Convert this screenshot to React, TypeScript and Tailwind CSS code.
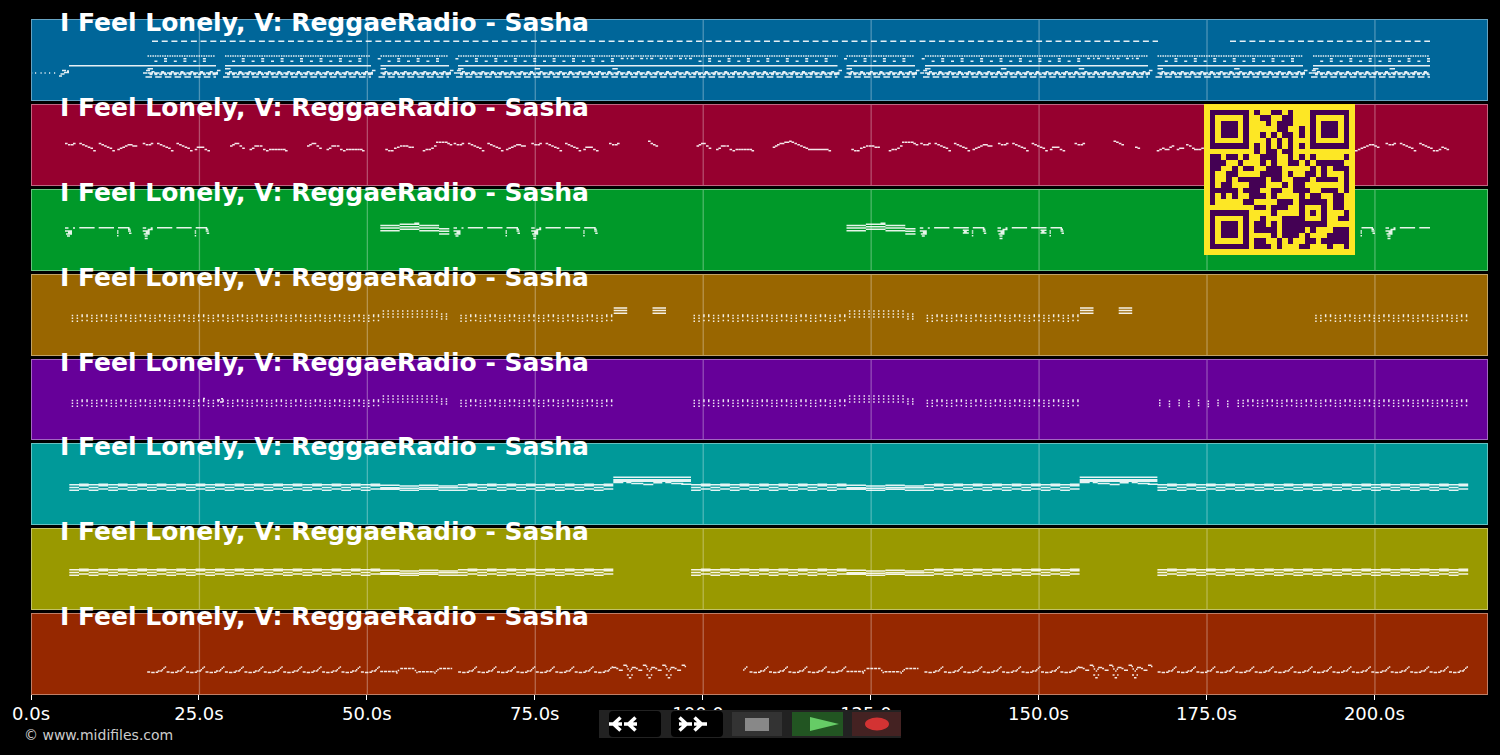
import { FC } from 'react';

interface Track {
  name: string;
  color: string;
  notes: string;
}

type Point = [number, number];

// The time axis: the roll starts at x = 31 and a bar of music is 19.43 wide
const ORIGIN = 31;
const WIDTH = 1457;
const BAR = 19.43;
const FIRST_BAR = 69.3;
const STEP = 167.93;

const at = (bar: number) => FIRST_BAR + bar * BAR;

const note = (x: number, y: number, length: number) =>
  `M${x.toFixed(1)} ${y.toFixed(1)}h${length.toFixed(1)}`;

// Repeats a note from one x to another
const repeat = (from: number, to: number, y: number, length: number, period: number) => {
  let d = '';
  for (let x = from; x < to - 0.5; x += period) d += note(x, y, Math.min(length, to - x));
  return d;
};

// A melodic line as short notes that step through the given points
const melody = (points: Point[], dx = 0) => {
  let d = '';
  for (let i = 0; i < points.length - 1; i++) {
    const [x1, y1] = points[i];
    const [x2, y2] = points[i + 1];
    const count = Math.max(1, Math.round((x2 - x1) / 2.6));
    for (let k = 0; k < count; k++) {
      const t = (k + 0.5) / count;
      const y = Math.round((y1 + (y2 - y1) * t) / 1.2) * 1.2;
      d += note(x1 + ((x2 - x1) * k) / count + dx, y, 2.6);
    }
  }
  return d;
};

const drums = () => {
  const sections: Point[] = [[147.5, 216], [225, 371], [380.5, 449], [458, 837.5], [846.5, 915], [925, 1148], [1157.5, 1303], [1313, 1430]];
  let d = repeat(152, 1158, 22.3, 6, BAR / 2) + repeat(1230, 1430, 22.3, 6, BAR / 2);
  d += note(69, 46.7, 79);
  d += [31, 35, 40.5, 44.5, 49, 54].map((x) => note(x, 54, 1.2)).join('');
  d += note(59, 57, 3) + note(60.5, 55, 4) + note(62, 51.5, 4) + note(64, 53.5, 5) + note(67, 52, 2);
  sections.forEach(([from, to]) => {
    d += repeat(from, to, 37, 1.5, BAR / 8);
    d += note(from, 46.7, to - from);
    d += note(from, 49.8, 5.5);
    d += repeat(from, to, 54, 5.5, BAR / 3);
    d += repeat(from + 2, to, 55.6, 3, BAR / 4);
    d += repeat(from + 4, to, 52.8, 3, BAR / 2);
    d += repeat(from - 2, to, 58, 6.5, BAR / 2);
    if (to < 1400) d += note(to - 1, 55, 3) + note(to + 1, 51.5, 3.5) + note(to, 53.5, 2);
  });
  for (let bar = 4; bar < 70; bar++) {
    const x = at(bar) + 7.4;
    const playing = sections.some(([from, to]) => x >= from - 2 && x + 10 < to + 3);
    if (!playing) continue;
    if ((bar >= 28 && bar < 32) || (bar >= 52 && bar < 56)) {
      d += note(x, 39.5, 3) + note(x + 6, 39.5, 1.5) + note(x + 10, 39.5, 3);
      continue;
    }
    d += note(x, 42.2, 3) + note(x + 9.6, 42.2, 3) + note(x + 9.6, 39.7, 3);
  }
  [16, 20, 40, 44].forEach((bar) => (d += note(at(bar) - 2.5, 39.7, 3)));
  [24, 28, 48, 52, 60, 68].forEach((bar) => (d += note(at(bar) - 1, 49.8, 5.5)));
  [4, 20, 44, 64].forEach((bar) => (d += note(at(bar) - 4, 54, 4) + note(at(bar) - 1, 51.5, 4)));
  return d;
};

const vocal = () => {
  const turn: Point[] = [[65, 39], [68, 41.3], [71, 41.3], [75, 39.5]];
  const fall: Point[] = [[79.3, 38.8], [96, 47]];
  const fall2: Point[] = [[98.7, 38.8], [115, 47]];
  const rise: Point[] = [[117.3, 46.5], [130, 40], [137, 43]];
  const close: Point[] = [[117, 47], [119, 44], [124, 42.5], [132.5, 48]];
  const arch: Point[] = [[230, 42], [236.7, 39], [245, 45]];
  const answer: Point[] = [[249.5, 46.8], [256.7, 41], [263, 43], [266, 47.5], [269, 45], [283, 45.5], [287, 48]];
  const low: Point[] = [[385.3, 45], [391, 47.2], [397, 44], [403, 42], [414, 43.4]];
  const climb: Point[] = [[422.7, 46.8], [434, 44.6], [436, 39], [445, 38], [452, 41]];
  let d = '';
  [0, 388.6, 855.2].forEach((dx) => {
    d += melody(turn, dx) + melody(fall, dx) + melody(fall2, dx) + melody(rise, dx);
    const next = dx + 77.7;
    d += melody(turn, next) + melody(fall, next) + melody(fall2, next) + melody(close, next);
  });
  [0, 77, 466.5].forEach((dx) => (d += melody(arch, dx) + melody(answer, dx)));
  [0, 466].forEach((dx) => (d += melody(low, dx) + melody(climb, dx)));
  d += melody(turn, 544) + melody(turn, 1009.5);
  d += melody([[648, 37], [658, 42.5]]) + melody([[1113.5, 37], [1124, 42]]) + melody([[1135, 43], [1140, 45]]);
  d += melody([[772.7, 44.5], [777, 40.5], [791.5, 37.5], [803, 42], [808, 45], [826, 45], [831, 48]]);
  d += melody([[1156.7, 46.8], [1162, 44.5], [1167, 46], [1174, 41.5]]);
  d += melody([[1176.7, 46], [1184, 43.5]]) + melody([[1186, 39.5], [1192, 43.5], [1196, 46], [1204, 44.5]]);
  d += melody([[1355, 47], [1371.7, 40.5], [1379.5, 43.5]]);
  d += melody(turn, 1320.5) + melody(fall, 1320.5) + melody(fall2, 1320.5);
  d += melody([[1436, 47], [1444, 43], [1449, 47]]);
  return d;
};

const horns = () => {
  const pickup = (x: number, deep: boolean) => {
    let d = note(x, 39, 3.5) + note(x + 8, 39, 2) + note(x, 42, 7) + note(x + 3, 43.6, 4);
    d += note(x + 1, 45, 6) + note(x + 2, 47, 3);
    return deep ? d + note(x + 2, 49.5, 3) + note(x + 5, 40.5, 5) : d;
  };
  const ending = (x: number) =>
    note(x + 53, 38.8, 11.5) + note(x + 52, 42, 1.5) + note(x + 52, 44, 1.5) + note(x + 52, 46.8, 1.5) +
    note(x + 63, 40.3, 2.5) + note(x + 63, 42, 3) + note(x + 64, 44.4, 2.5);
  let d = '';
  [65, 142.7, 453.5, 531.2, 919.8, 997.5].forEach((x, i) => {
    d += pickup(x, i % 2 === 1) + note(x + 14.3, 38.8, 15.3) + note(x + 33.7, 38.8, 15.3) + ending(x);
    if (i > 3) d += note(x + 43, 41.3, 6) + note(x + 43, 44, 6) + note(x + 44, 42.6, 3);
  });
  d += ending(1308.5) + pickup(1385.5, true) + note(1399.8, 38.8, 15.3) + note(1419.3, 38.8, 10.7);
  [380.3, 846.5].forEach((x) => {
    [36.5, 39, 41.8].forEach((y) => (d += note(x, y, 19.4) + note(x + 39, y, 19.8)));
    [35.2, 37.8, 40.4].forEach((y) => (d += note(x + 19.4, y, 19.6)));
    [39.8, 42.4, 45].forEach((y) => (d += note(x + 58.8, y, 10.2)));
    d += note(x + 34, 34.2, 5);
  });
  return d;
};

// Off-beat guitar chops: a column of dots on every quarter of a bar
const chops = (from: number, to: number, high = false) => {
  let d = '';
  for (let i = 0; i < Math.round((to - from) * 4); i++) {
    const x = at(from + i / 4) + 2.4;
    const rows = high ? [37, 40, 43] : i % 4 < 2 ? [41.6, 44.2, 47.2] : [41, 42.6, 46.6];
    rows.forEach((y) => (d += note(x, y, 1.5)));
  }
  return d;
};

const chopsPart = () => {
  let d = chops(0, 16) + chops(20, 28) + chops(32, 40) + chops(44, 52);
  [16, 40].forEach((bar) => {
    d += chops(bar, bar + 3, true);
    [0, 1].forEach((i) => [40, 42.5, 45].forEach((y) => (d += note(at(bar + 3 + i / 4) + 2.4, y, 1.5))));
  });
  return d;
};

const guitar = () => {
  let d = chopsPart() + chops(64, 72);
  [613.7, 652.5, 1080, 1118.7].forEach((x) => [34, 36.6, 39.2].forEach((y) => (d += note(x, y, 13.5))));
  return d;
};

const clavinet = () => {
  let d = chopsPart() + chops(60, 72);
  for (let i = 0; i < 8; i++) {
    [41.2, 44, 46.5].forEach((y) => (d += note(at(56 + i / 2) + 1.6, y + (i % 2), 1.5)));
  }
  return d + note(203, 39.5, 2) + note(217, 41, 3) + note(220, 43, 3) + note(221, 39.8, 2);
};

const pads = (from: number, to: number) => {
  let d = '';
  for (let i = 0; i < (to - from) * 2; i++) {
    const rows = i % 2 ? [41.2, 42.8, 46] : [41.8, 44.5, 47.4];
    rows.forEach((y) => (d += note(at(from + i / 2), y, BAR / 2)));
  }
  return d;
};

const padsPart = () => {
  let d = pads(0, 16) + pads(20, 28) + pads(32, 40) + pads(44, 52) + pads(56, 72);
  [16, 40].forEach((bar) => {
    [[42.2, 44.8, 46.4], [43, 45.2, 47.4], [42.2, 44.6, 46.4], [43, 44.8, 47.2]].forEach((rows, i) =>
      rows.forEach((y) => (d += note(at(bar + i), y, BAR)))
    );
  });
  return d;
};

const organ = () => {
  let d = padsPart();
  [28, 52].forEach((bar) => {
    [34.2, 36.8, 38.4].forEach((y) => (d += note(at(bar), y, BAR * 4)));
    d += note(at(bar), 39.5, 10) + note(at(bar) + 13, 39.5, 5) + note(at(bar) + 18, 40.6, 12);
    d += note(at(bar) + 30, 41.6, 10) + note(at(bar) + 40, 39.8, 9) + note(at(bar) + 52, 39.5, 6);
    d += note(at(bar) + 58, 40.6, 12) + note(at(bar) + 68, 41.4, 10);
  });
  return d;
};

const bass = () => {
  const riff = (from: number, to: number) => {
    let d = '';
    for (let bar = from; bar < to; bar++) {
      const x = at(bar) + 0.2;
      d += note(x, 59.2, 3) + note(x + 4, 59.6, 3.5) + note(x + 8.5, 59.4, 2.5) + note(x + 10.5, 58.2, 2);
      d += note(x + 13, 58.2, 2) + note(x + 14.5, 56.8, 1.5) + note(x + 16, 55.4, 1.5) + note(x + 17.5, 54, 1.5);
    }
    return d;
  };
  let d = riff(4, 16) + riff(20, 28) + riff(35, 40) + riff(44, 52) + riff(56, 72);
  d += note(743, 57, 1.5) + note(744.5, 55.5, 1.5) + note(746, 54, 1.5);
  [16, 40].forEach((bar) => {
    const x = at(bar);
    d += repeat(x, x + 17, 58.6, 3, 3.8) + repeat(x + 20, x + 34, 55.6, 3, 3.8);
    d += repeat(x + 38, x + 54, 58.8, 3, 3.8) + repeat(x + 59, x + 72, 55.6, 3, 3.8);
    d += note(x + 16, 60, 1.5) + note(x + 17.5, 57.5, 1.5) + note(x + 34.5, 57.5, 1.5) + note(x + 36, 59.6, 1.5);
    d += note(x + 54, 60, 1.5) + note(x + 55.5, 58.4, 1.5) + note(x + 57, 56.8, 1.5);
  });
  [28, 52].forEach((bar) => {
    for (let i = 0; i < 4; i++) {
      const x = at(bar + i);
      d += note(x - 1, 54.5, 4) + note(x + 3, 55.6, 2) + note(x + 5.5, 57.4, 4) + note(x + 10, 52.4, 3.5) + note(x + 13, 53.6, 1.5);
      if (i === 3) continue;
      d += note(x + 14, 56, 1.5) + note(x + 13.5, 62, 2) + note(x + 15.5, 64.8, 2.5) + note(x + 18, 62, 1.5);
      d += note(x + 16, 58, 1.5) + note(x + 17.5, 56.4, 1.5);
    }
  });
  return d;
};

const title = 'I Feel Lonely, V: ReggaeRadio - Sasha';

const tracks: Track[] = [
  { name: title, color: 'bg-[#006699]', notes: drums() },
  { name: title, color: 'bg-[#96002f]', notes: vocal() },
  { name: title, color: 'bg-[#009929]', notes: horns() },
  { name: title, color: 'bg-[#996600]', notes: guitar() },
  { name: title, color: 'bg-[#660099]', notes: clavinet() },
  { name: title, color: 'bg-[#009999]', notes: organ() },
  { name: title, color: 'bg-[#999900]', notes: padsPart() },
  { name: title, color: 'bg-[#962800]', notes: bass() },
];

const ticks = ['0.0s', '25.0s', '50.0s', '75.0s', '100.0s', '125.0s', '150.0s', '175.0s', '200.0s'];

const qrRows = [
  '#######.#..##.#...#######',
  '#.....#..##..##...#.....#',
  '#.###.#...#.###...#.###.#',
  '#.###.#.....##..#.#.###.#',
  '#.###.#..#.#.##.#.#.###.#',
  '#.....#...#.#.#...#.....#',
  '#######.#.#.#.#.#.#######',
  '........#.##.##..........',
  '##.##.#..###..#.#.#.....#',
  '###..#...#.#..##.#.#####.',
  '##..#.##..###.....#.#.###',
  '#..##....####.#..##.#...#',
  '#..#.#####.##..###.####.#',
  '#.##...###...#.##.......#',
  '#####.###..##..###..###.#',
  '#.#.#..###.#....#.##..##.',
  '#.....##....###.#####.##.',
  '........##.###..#...#.##.',
  '#######....#....#.#.#...#',
  '#.....#..#...####...#..##',
  '#.###.#.##.#.########....',
  '#.###.#.####.####.#...###',
  '#.###.#....#.###.#...####',
  '#.....#.##..#.#..##.#####',
  '#######.###.#...##...#..#',
];

const QrCode: FC = () => (
  <svg viewBox="0 0 27 27" className="block h-full w-full" role="img" aria-label="QR code">
    <rect width="27" height="27" fill="#fde725" />
    <g shapeRendering="crispEdges" fill="#440154">
      {qrRows.map((row, y) =>
        row.split('').map((cell, x) =>
          cell === '#' ? <rect key={`${x}-${y}`} x={x + 1} y={y + 1} width="1" height="1" /> : null
        )
      )}
    </g>
  </svg>
);

const TrackRow: FC<{ track: Track }> = ({ track }) => (
  <section className={`relative min-h-0 flex-1 border border-white/40 ${track.color}`}>
    <svg viewBox={`${ORIGIN + 1} 1 ${WIDTH - 2} 80`} preserveAspectRatio="none" className="block h-full w-full" aria-hidden="true">
      {ticks.slice(1).map((tick, i) => (
        <path key={tick} d={`M${ORIGIN + 0.5 + STEP * (i + 1)} 0v82`} stroke="#fff" strokeOpacity="0.3" strokeWidth="1.3" />
      ))}
      <path d={track.notes} fill="none" stroke="#fff" strokeOpacity="0.9" strokeWidth="1.5" />
    </svg>
    <h2 className="absolute -top-[11px] left-7 text-[25px] leading-7 font-bold whitespace-nowrap text-white">{track.name}</h2>
  </section>
);

const App: FC = () => {
  return (
    <div className="relative flex h-screen min-h-[600px] flex-col overflow-hidden bg-black pt-[19px] font-['DejaVu_Sans',sans-serif] text-white">
      <main className="flex min-h-0 flex-1 flex-col gap-[3px] pr-3 pl-[31px]">
        {tracks.map((track, index) => (
          <TrackRow key={index} track={track} />
        ))}
      </main>

      <ol className="flex h-[30px] pr-3 pl-[31px]">
        {ticks.map((tick, index) => (
          <li
            key={tick}
            className="flex w-0 flex-col items-center"
            style={{ marginLeft: index === 0 ? 0 : `${(STEP / WIDTH) * 100}%` }}
          >
            <span className="h-[5px] w-px shrink-0 bg-white" />
            <span className="mt-1 text-lg leading-5 whitespace-nowrap">{tick}</span>
          </li>
        ))}
      </ol>

      <footer className="h-[30px] pl-6 text-sm leading-5 text-[#cccccc]">© www.midifiles.com</footer>

      <div className="absolute top-[104px] right-[145px] h-[151px] w-[151px]">
        <QrCode />
      </div>

      <div className="absolute bottom-[17px] left-1/2 flex h-7 w-[302px] -translate-x-1/2 items-stretch justify-between bg-[#222222] pl-[10px]">
        <button type="button" aria-label="Rewind" className="my-px w-[52px] rounded-sm bg-black">
          <svg viewBox="0 0 52 26" className="block h-full w-full" fill="none" stroke="#fff" strokeWidth="3.500">
            <path d="M0 13h13M11.500 6.500l-7 6.500 7 6.500M15 13h13M26.500 6.500l-7 6.500 7 6.500" />
          </svg>
        </button>
        <button type="button" aria-label="Fast forward" className="my-px w-[52px] rounded-sm bg-black">
          <svg viewBox="0 0 52 26" className="block h-full w-full" fill="none" stroke="#fff" strokeWidth="3.500">
            <path d="M8 13h13M8.500 6.500l7 6.500-7 6.500M23 13h13M23.500 6.500l7 6.500-7 6.500" />
          </svg>
        </button>
        <button type="button" aria-label="Stop" className="my-0.5 w-[50px] bg-[#333333]">
          <svg viewBox="0 0 50 24" className="block h-full w-full">
            <rect x="13" y="6" width="24" height="13" fill="#888888" />
          </svg>
        </button>
        <button type="button" aria-label="Play" className="my-0.5 w-[51px] bg-[#225522]">
          <svg viewBox="0 0 51 24" className="block h-full w-full">
            <path d="M18 5l29 7-29 7z" fill="#66cc66" />
          </svg>
        </button>
        <button type="button" aria-label="Record" className="my-0.5 w-[49px] bg-[#442222]">
          <svg viewBox="0 0 49 24" className="block h-full w-full">
            <ellipse cx="25" cy="12" rx="12" ry="6.500" fill="#d33333" />
          </svg>
        </button>
      </div>
    </div>
  );
};

export default App;
